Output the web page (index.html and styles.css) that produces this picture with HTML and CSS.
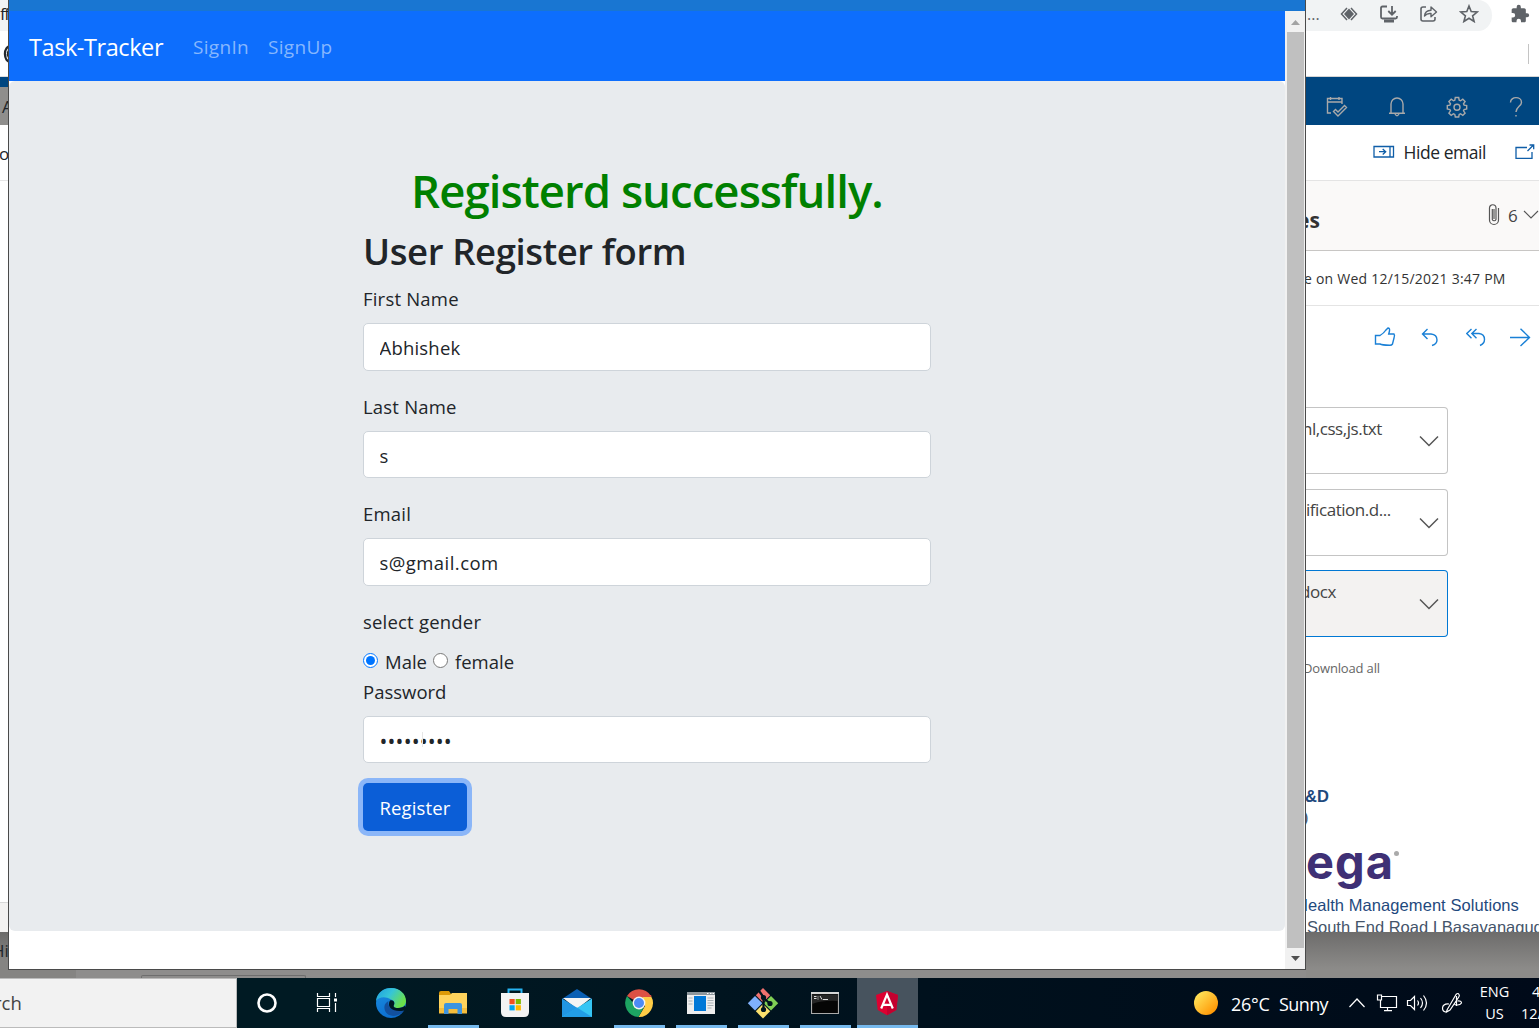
FILE: index.html
```html
<!DOCTYPE html>
<html lang="en">
<head>
<meta charset="utf-8">
<title>Task-Tracker</title>
<link rel="stylesheet" href="styles.css">
</head>
<body>
<div class="desktop">
  <div class="workspace">
    <aside class="edge-left">
      <div class="el-tab">ff</div>
      <div class="el-bar"><svg width="8" height="20" viewBox="0 0 8 20"><path d="M9 2C1 2 1 18 9 18M9 6C5 6 5 14 9 14" fill="none" stroke="#24292e" stroke-width="2.4"/></svg></div>
      <div class="el-blue"></div>
      <div class="el-gray">A</div>
      <div class="el-tool">o</div>
      <div class="el-body"></div>
      <div class="el-foot"></div>
      <div class="el-dim">Hi</div>
    </aside>

    <main class="center">
      <section class="window">
        <div class="titlebar"></div>
        <div class="viewport">
          <div class="page">
            <nav class="navbar">
              <a class="brand">Task-Tracker</a>
              <a class="link">SignIn</a>
              <a class="link">SignUp</a>
            </nav>
            <div class="jumbotron">
              <form class="form">
                <h1>Registerd successfully.</h1>
                <h2>User Register form</h2>
                <label class="label">First Name</label>
                <input class="field name" type="text" value="Abhishek">
                <label class="label">Last Name</label>
                <input class="field" type="text" value="s">
                <label class="label">Email</label>
                <input class="field mail" type="text" value="s@gmail.com">
                <label class="label gender">select gender</label>
                <div class="radios">
                  <input type="radio" name="g" checked><span class="male">Male</span>
                  <input type="radio" name="g"><span class="female">female</span>
                </div>
                <label class="label pwlabel">Password</label>
                <div class="pw"><input class="field dots" type="password" value="password1"><i class="ibeam"></i></div>
                <button class="submit" type="button">Register</button>
              </form>
            </div>
          </div>
          <div class="scrollbar">
            <svg class="arrow" width="19" height="21" viewBox="0 0 19 21"><path d="M6 14l4.500-5 4.500 5z" fill="#a3a3a3"/></svg>
            <div class="thumb"></div>
            <svg class="arrow" width="19" height="21" viewBox="0 0 19 21"><path d="M6 8h9l-4.500 5z" fill="#505050"/></svg>
          </div>
        </div>
      </section>
      <div class="under"><div class="under-left"></div><div class="under-box"></div></div>
    </main>

    <aside class="edge-right">
      <div class="omni">
        <span class="omni-dots">...</span>
        <svg class="i-eye" width="18" height="16" viewBox="0 0 18 16" fill="none" stroke="#5f6368" stroke-width="1.500"><path d="M7 2L1.500 8 7 14M11 2L16.500 8 11 14"/><path d="M9 2.500l5 5.500-5 5.500L4 8z" fill="#5f6368" stroke="none"/></svg>
        <svg class="i-install" width="20" height="18" viewBox="0 0 20 18" fill="none" stroke="#5f6368" stroke-width="1.800"><path d="M8 1.500H3.500Q2 1.500 2 3v9q0 1.500 1.500 1.500h13Q18 13.500 18 12v-1M13 1v8M9.300 6l3.700 3.700L16.700 6"/><path d="M5 16h10" stroke-width="3"/></svg>
        <svg class="i-share" width="20" height="18" viewBox="0 0 20 18" fill="none" stroke="#5f6368" stroke-width="1.600"><path d="M7 2H4Q2 2 2 4v10q0 2 2 2h10q2 0 2-2v-2"/><path d="M5.500 11Q6 5.500 12 5.300V2l5.500 5-5.500 4.800V8.500Q8 8 5.500 11z" stroke-width="1.400" stroke-linejoin="round"/></svg>
        <svg class="i-star" width="20" height="19" viewBox="0 0 20 19"><path d="M10 2l2.200 5.600 6 .4-4.600 3.800 1.500 5.700L10 14.300l-5.100 3.200 1.500-5.700L1.800 8l6-.4z" fill="none" stroke="#5f6368" stroke-width="1.600"/></svg>
      </div>
      <svg class="puzzle" width="20" height="20" viewBox="0 0 24 24" fill="#5f6368"><path d="M20.500 11H19V7c0-1.100-.9-2-2-2h-4V3.500a2.500 2.500 0 0 0-5 0V5H4c-1.100 0-2 .9-2 2v3.800h1.500a2.700 2.700 0 0 1 0 5.400H2V20c0 1.100.9 2 2 2h3.800v-1.500a2.700 2.700 0 0 1 5.400 0V22H17c1.100 0 2-.9 2-2v-4h1.500a2.500 2.500 0 0 0 0-5z"/></svg>
      <div class="bookmarks"><i></i></div>
      <div class="suite">
        <svg width="22" height="22" viewBox="0 0 22 22"><path d="M5 17H1.500V2.500H16V8M1.500 6H16M4.500 1v3M13 1v3M7.500 15.500l2-2 2.500 2.500 6.500-6.500 2 2L12 20z"/></svg>
        <svg width="20" height="22" viewBox="0 0 20 22"><path d="M4 17V8a6 6 0 0 1 12 0v9M2 17.200h16M8 18q2 3.500 4 0"/></svg>
        <svg width="22" height="22" viewBox="0 0 22 22"><path d="M9.300 1.500h3.400l.5 2.700 1.300.6 2.300-1.600 2.300 2.300-1.600 2.300.6 1.300 2.600.5v3.400l-2.600.5-.6 1.300 1.600 2.300-2.300 2.300-2.300-1.600-1.300.6-.5 2.600H9.300l-.5-2.600-1.300-.6-2.300 1.600-2.300-2.300 1.600-2.300-.6-1.300-2.600-.5V9.600l2.600-.5.6-1.300-1.600-2.300 2.300-2.300 2.300 1.600 1.300-.6z"/><circle cx="11" cy="11.200" r="3"/></svg>
        <svg class="help" width="14" height="22" viewBox="0 0 14 22"><path d="M1.500 6.500C1.500 0 12.500 0 12.500 6.500 12.500 10 7 11 7 16M7 19v1.500"/></svg>
      </div>
      <div class="cmds">
        <svg width="22" height="14" viewBox="0 0 22 14" fill="none" stroke="#0f5ea8" stroke-width="1.300"><path d="M1 1.500h19.500v10.500H1zM17 1.500v10.500M6 6.700h6.500M9.700 4l3 2.700-3 2.800"/></svg>
        <span class="t-hide">Hide email</span>
        <svg class="popout" width="20" height="16" viewBox="0 0 20 16" fill="none" stroke="#0f5ea8" stroke-width="1.300"><path d="M12 3.500H1v10.800h16V8M12.500 7l6-6M14.500 1h4.200v4.200"/></svg>
      </div>
      <div class="subject">
        <b>es</b>
        <svg class="clip" width="12" height="22" viewBox="0 0 12 22" fill="none" stroke="#555" stroke-width="1.200"><path d="M10.500 4v12a4.500 4.500 0 0 1-9 0V4a3.200 3.200 0 0 1 6.500 0v11.500a2 2 0 0 1-3.700 0V5M6 5v10"/></svg>
        <span>6</span>
        <svg class="chev" width="16" height="10" viewBox="0 0 16 10" fill="none" stroke="#555" stroke-width="1.100"><path d="M1 1l7 7 7-7"/></svg>
      </div>
      <div class="sent">e on Wed 12/15/2021 3:47 PM</div>
      <div class="actions">
        <svg class="a1" width="22" height="20" viewBox="0 0 22 20"><path d="M1.500 8.500H6Q10 6 11.500 3.500L14 1q2 0 1.500 3l-.8 3H20q1 1 0 4l-1.500 6q-1 1.500-3 1.300Q8 18 6 17H1.500z"/></svg>
        <svg class="a2" width="18" height="20" viewBox="0 0 18 20"><path d="M6.500 2L1.500 7l5 5M1.500 7H10q6 .5 6 6 0 4-5 5.500"/></svg>
        <svg class="a3" width="20" height="20" viewBox="0 0 20 20"><path d="M5.500 2L.8 6.500l4.700 4.700M10.500 2L5.800 6.500l4.700 4.700M5.800 6.500H13q5.500.5 5.500 6 0 4-4.500 6"/></svg>
        <svg class="a4" width="22" height="20" viewBox="0 0 22 20"><path d="M1 10.500h19.500M11.500 1.700l9 8.800-9 8.500"/></svg>
      </div>
      <div class="files">
        <div class="file"><span class="f1">nl,css,js.txt</span><svg width="20" height="12" viewBox="0 0 20 12"><path d="M1 1.500l9 9 9-9"/></svg></div>
        <div class="file"><span class="f2">ification.d...</span><svg width="20" height="12" viewBox="0 0 20 12"><path d="M1 1.500l9 9 9-9"/></svg></div>
        <div class="file sel"><span class="f3">docx</span><svg width="20" height="12" viewBox="0 0 20 12"><path d="M1 1.500l9 9 9-9"/></svg></div>
      </div>
      <div class="download">Download all</div>
      <div class="signature">
        <div class="sg1">&amp;D</div>
        <div class="sg2">)</div>
        <div class="logo">ega<i></i></div>
        <div class="sg3">Health Management Solutions</div>
        <div class="sg4">South End Road I Basavanagudi</div>
      </div>
      <div class="er-dim"></div>
    </aside>
  </div>

  <footer class="taskbar">
    <div class="search">rch</div>
    <div class="cell sys"><svg width="22" height="22" viewBox="0 0 22 22"><circle cx="11" cy="11" r="8.500" fill="none" stroke="#fff" stroke-width="2.600"/></svg></div>
    <div class="cell sys tv"><svg width="22" height="22" viewBox="0 0 22 22" fill="none" stroke="#fff" stroke-width="1.200"><path d="M1.500 1v3.500h12V1M1.500 6.500h12v8h-12zM1.500 20v-3.500h12V20M19.500 1v4M19.500 11v9"/><path d="M18 6.500h3v3h-3z" fill="#fff" stroke="none"/></svg></div>
    <div class="cell"><svg width="32" height="32" viewBox="0 0 32 32">
      <defs><linearGradient id="e1" x1="0" y1="0" x2="1" y2=".5"><stop offset="0" stop-color="#1d9de0"/><stop offset=".5" stop-color="#36c5d8"/><stop offset="1" stop-color="#6be04a"/></linearGradient><linearGradient id="e2" x1="0" y1="0" x2=".4" y2="1"><stop offset="0" stop-color="#1b8fe0"/><stop offset="1" stop-color="#0c6fd0"/></linearGradient></defs>
      <circle cx="16" cy="16" r="15" fill="url(#e2)"/>
      <path d="M1 14C2 5 9 1 16 1c9 0 15 6 15 13 0 5-4 7-8 7-4 0-5-1.500-4-3 1-2 .5-4.500-3-5.500C10 9 4 10 1 14z" fill="url(#e1)"/>
      <path d="M15 13.500c4-1 5 2.500 4 4.500-1 1.500 0 3 4 3 3 0 6-1 7-2.500l1.500 3-3 2.500c-5 2-11 1-13-2s-2-6.500-.5-8.500z" fill="#001822"/>
      <path d="M13.500 14c-1.500 6 4.500 12 15.500 9.500C22 33 8 29 9.500 19c.3-2 2-4 4-5z" fill="#12509e"/>
      </svg></div>
    <div class="cell run"><svg width="30" height="26" viewBox="0 0 30 26"><path d="M1 3Q1 1 3 1h8l2 3v3H1z" fill="#dd9a07"/><path d="M1 5h11l2-2h15v20H1z" fill="#ffd35c"/><path d="M1 18h28v5.500H1z" fill="#f5bd3c"/><path d="M6 24V15q0-2 2-2h14q2 0 2 2v9h-4.500v-5h-9v5z" fill="#3d94df"/></svg></div>
    <div class="cell"><svg width="30" height="32" viewBox="0 0 30 32"><path d="M8.500 8V2.500h13V8" fill="none" stroke="#27b4f2" stroke-width="2"/><path d="M1 6h28v19q0 5-5 5H6q-5 0-5-5z" fill="#f3f3f3"/><path d="M9.500 12h5.200v5.200H9.500z" fill="#f25022"/><path d="M15.700 12h5.200v5.200h-5.200z" fill="#7fba00"/><path d="M9.500 18.200h5.200v5.200H9.500z" fill="#00a4ef"/><path d="M15.700 18.200h5.200v5.200h-5.200z" fill="#ffb900"/></svg></div>
    <div class="cell"><svg width="32" height="30" viewBox="0 0 32 30"><path d="M1 11L16 1l15 10z" fill="#0a5fb4"/><path d="M2 10h28L16 21z" fill="#f4f4f4"/><path d="M1 10.500L31 29H1z" fill="#2196e3"/><path d="M31 10.500L16 20 1 29h30z" fill="#36c5f4"/><path d="M16 19.500L31 29H1z" fill="#229de6"/></svg></div>
    <div class="cell run"><svg width="30" height="30" viewBox="0 0 30 30"><path d="M15 15L3 8A14 14 0 0 1 27 8z" fill="#dd5144"/><path d="M27 8a14 14 0 0 1-12.500 21L21 18l-3-10z" fill="#ffcd46"/><path d="M3 8a14 14 0 0 0 11.500 21L20 19l-8-1z" fill="#1da462"/><path d="M15 8h12.200" stroke="#dd5144" stroke-width="2"/><circle cx="15" cy="15" r="6.400" fill="#f4f4f4"/><circle cx="15" cy="15" r="5" fill="#4c8bf5"/></svg></div>
    <div class="cell run"><svg width="28" height="24" viewBox="0 0 28 24"><path d="M0 1h28v22H0z" fill="#eee"/><path d="M0 1h28v3H0z" fill="#8c969c"/><path d="M20 2.500h1.500M23 2.500h1.500M25.500 2.500H27" stroke="#fff"/><path d="M7 5h12v15H7z" fill="#0078d7"/><path d="M1.500 7h4M1.500 10h4M1.500 13h4M20.500 7h6M20.500 9.500h6M20.500 12h6M20.500 14.500h6M20.500 17h4" stroke="#a9b1b5" stroke-width="1.200"/></svg></div>
    <div class="cell run"><svg width="32" height="32" viewBox="0 0 32 32"><path d="M16 1l7.200 7.200L16 15.500 8.800 8.200z" fill="#f0716f"/><path d="M8 9l7.300 7.200L8 23.500.8 16.200z" fill="#7fb0fb"/><path d="M24 9l7.200 7.200L24 23.500l-7.300-7.300z" fill="#80cf54"/><path d="M16 17l7.200 7.200L16 31.500l-7.200-7.300z" fill="#fbe06d"/><path d="M12 4l4.500 6v12M16.500 11l6.500 5.500" stroke="#00141f" stroke-width="2.200" fill="none"/><circle cx="16.500" cy="10.500" r="2.600" fill="#00141f"/><circle cx="23" cy="16.500" r="2.600" fill="#00141f"/><circle cx="16.500" cy="22.500" r="2.600" fill="#00141f"/></svg></div>
    <div class="cell run cmd"><svg width="28" height="24" viewBox="0 0 28 24"><path d="M.5 1.500h27v21H.5z" fill="#050505" stroke="#aaa" stroke-width="1.200"/><path d="M0 1h28v2H0z" fill="#d6d6d6"/><path d="M1 22V13Q12 9 27 10V3.500H1z" fill="#262626"/><path d="M3 7.500h2.500M3 5.500h2.500M7 5.500v1M7 7.500v1M9 5l2 3.500M12 8.500h5" stroke="#ddd" stroke-width="1"/></svg></div>
    <div class="cell run active"><svg width="24" height="26" viewBox="0 0 24 26"><path d="M12 1l11 4-1.700 15L12 25.200 2.700 20 1 5z" fill="#dd0031"/><path d="M12 1l11 4-1.700 15L12 25.200z" fill="#c3002f"/><path d="M6.200 18.500L12 4.500l5.800 14M8.500 14.800h7" fill="none" stroke="#fff" stroke-width="2.200"/></svg></div>
    <div class="tray">
      <svg class="sun" width="24" height="24" viewBox="0 0 24 24"><defs><linearGradient id="s" x1="0" y1="0" x2="1" y2="1"><stop offset=".1" stop-color="#ffe65c"/><stop offset=".9" stop-color="#ff9300"/></linearGradient></defs><circle cx="12" cy="12" r="12" fill="url(#s)"/></svg>
      <span class="temp">26°C</span><span class="cond">Sunny</span>
      <svg class="up" width="18" height="12" viewBox="0 0 18 12"><path d="M1.500 10L9 2l7.500 8"/></svg>
      <svg class="net" width="22" height="20" viewBox="0 0 22 20"><path d="M6 3.500h14.500v11H4.500V7.500M11.500 14.500v3M8 17.700h8M1.500 2h4v5h-4z"/></svg>
      <svg class="vol" width="22" height="20" viewBox="0 0 22 20"><path d="M1.500 7.500h3l4-4v13l-4-4h-3zM11.500 7.500q2 2.500 0 5M14.500 5q4 5 0 10M17.500 2.500q6 7.500 0 15"/></svg>
      <svg class="pen" width="22" height="22" viewBox="0 0 22 22"><path d="M6 18L15 2.500q2-2 3 0 1 1-.5 3L9 18l-3.500 2zM8 12q-6-.5-6.500 4 0 4 4 4M13.500 12.500q5 1.500 7-1.500 0-2.500-4-2M15.500 4v10"/></svg>
      <div class="lang"><span>ENG</span><span>US</span></div>
      <div class="clock"><span class="hr">4:10 PM</span><span>12/15/2021</span></div>
    </div>
  </footer>
</div>
</body>
</html>
```
FILE: styles.css
```css
* { box-sizing: border-box; }
body { margin: 0; font-family: "Open Sans", "Noto Sans", sans-serif; color: #212529; }
.desktop { width: 1539px; height: 1028px; display: flex; flex-direction: column; overflow: hidden; background: #8c8b89; }
.workspace { display: flex; height: 978px; }
svg { display: block; flex: none; }
span, label { white-space: nowrap; }

/* sliver of the mail window on the left */
.edge-left { width: 8px; flex: none; overflow: hidden; display: flex; flex-direction: column; background: #fff; }
.edge-left > div { flex: none; overflow: hidden; white-space: nowrap; }
.el-tab { height: 31px; background: #f1f3f4; font-size: 17px; line-height: 27px; letter-spacing: -1.5px; }
.el-bar { height: 46px; padding: 13px 0 0 2px; border-bottom: 1px solid #ddd; }
.el-blue { height: 10px; background: #004680; }
.el-gray { height: 38px; background: #8f8e8c; font-size: 17px; line-height: 40px; padding-left: 2px; }
.el-tool { height: 56px; line-height: 57px; font-size: 17px; text-indent: -1px; border-bottom: 1px solid #e5e5e5; }
.el-body { height: 721px; }
.el-foot { height: 30px; background: #f3f2f1; border-top: 1px solid #d8d8d8; }
.el-dim { height: 46px; background: linear-gradient(#6b6a69, #858482 60%); font-size: 17px; line-height: 38px; text-indent: -8px; }

/* application window */
.center { width: 1298px; flex: none; display: flex; flex-direction: column; }
.window { height: 970px; border: 1px solid #4a4a4a; border-top: 0; background: #fff; display: flex; flex-direction: column; }
.titlebar { height: 11px; background: #1976d2; }
.viewport { flex: 1; display: flex; }
.page { width: 1276px; }
.navbar { height: 70px; background: #0d6efd; display: flex; align-items: center; padding: 1px 20px 0; color: #fff; }
.brand { width: 164px; font-size: 23.5px; line-height: 30px; letter-spacing: -.42px; }
.link { font-size: 19px; color: #86b7fe; width: 75px; letter-spacing: .3px; }
.jumbotron { height: 850px; background: #e8ebee; border-radius: 6px; padding-top: 79px; }
.form { width: 568px; margin: 0 auto; display: flex; flex-direction: column; align-items: flex-start; }
h1, h2 { margin: 0; font-weight: 600; white-space: nowrap; }
h1 { align-self: center; color: #008000; font-size: 45.5px; line-height: 60px; height: 68px; letter-spacing: -.95px; }
h2 { font-size: 36.5px; line-height: 47px; height: 56px; letter-spacing: -.4px; }
.label { font-size: 18.5px; line-height: 30px; height: 39px; letter-spacing: .2px; }
.pwlabel { letter-spacing: 0; }
.gender { height: 40px; }
.field { width: 568px; height: 47.5px; border: 1px solid #ced4da; border-radius: 5px; background: #fff; padding: 2px 15px 0 15.500px; font: 18.5px "Open Sans", sans-serif; color: #212529; margin-bottom: 21px; outline: 0; }
.name { letter-spacing: .2px; }
.mail { letter-spacing: .45px; }
.radios { display: flex; align-items: center; height: 30px; font-size: 18.5px; line-height: 30px; }
.radios input { width: 15px; height: 15px; margin: 0 7px 3px 0; }
.male { width: 48px; }
.pw { position: relative; height: 67px; }
.dots { font-size: 21px; letter-spacing: .15px; padding-top: 3px; }
.ibeam { position: absolute; left: 59px; top: 16px; width: 1px; height: 15px; background: #e6e6e6; }
.submit { width: 104px; height: 48px; border: 0; border-radius: 5px; background: #0b5ed7; box-shadow: 0 0 0 5px #8bb6f8; color: #fff; font: 18.5px "Open Sans", sans-serif; letter-spacing: .15px; padding: 2px 0 0; }
.scrollbar { width: 20px; background: #f1f1f1; display: flex; flex-direction: column; }
.thumb { flex: 1; margin: 0 1px 0 2px; background: #c0c0c0; }
.under { height: 8px; display: flex; background: #8e8d8c; }
.under-left { width: 68px; background: #858482; }
.under-box { width: 165px; height: 3px; margin: 5px 0 0 65px; border: 1px solid #6e6e6e; border-bottom: 0; border-radius: 2px 2px 0 0; }

/* mail window on the right */
.edge-right { width: 233px; flex: none; position: relative; background: #fff; overflow: hidden; display: flex; flex-direction: column; }
.edge-right > div { flex: none; }
.omni { width: 186px; height: 31px; background: #f1f3f4; border-radius: 0 16px 16px 0 / 0 18px 18px 0; display: flex; align-items: center; padding-bottom: 4px; }
.omni-dots { width: 34px; font-size: 16px; color: #5f6368; text-indent: 1px; }
.i-eye { margin-right: 21px; }
.i-install { margin-right: 20px; }
.i-share { margin-right: 20px; }
.puzzle { position: absolute; left: 204px; top: 4px; }
.bookmarks { height: 46px; border-bottom: 1px solid #d5d5d5; padding: 13px 10px 0; display: flex; justify-content: flex-end; }
.bookmarks i { width: 1px; height: 20px; background: #c4c4c4; }
.suite { height: 48px; background: #004680; display: flex; align-items: center; padding: 11px 0 0 20px; }
.suite svg { fill: none; stroke: #a9a9a9; stroke-width: 1.4; }
.suite svg + svg { margin-left: 39px; }
.suite .help { margin-left: 41px; }
.cmds { height: 56px; display: flex; align-items: center; padding: 0 0 2px 67px; border-bottom: 1px solid #e4e4e4; }
.t-hide { margin-left: 8.500px; width: 111.500px; font-size: 17.5px; letter-spacing: -.45px; }
.subject { height: 70px; background: #faf9f8; border-bottom: 1px solid #c8c6c4; display: flex; align-items: center; font-size: 17px; color: #444; }
.subject b { font-size: 21px; width: 182px; text-indent: -9px; padding-top: 9px; color: #333; }
.subject span { margin-left: 8px; width: 14.500px; }
.clip { margin-bottom: 1px; }
.chev { margin-bottom: 2px; }
.sent { height: 55px; line-height: 55px; font-size: 14px; text-indent: -2px; letter-spacing: .23px; color: #333; border-bottom: 1px solid #e4e4e4; white-space: nowrap; }
.actions { height: 101px; padding: 21px 0 0 68px; display: flex; }
.actions svg { fill: none; stroke: #1a80d6; stroke-width: 1.4; }
.a2 { margin-left: 25px; } .a3 { margin-left: 27px; } .a4 { margin-left: 23px; }
.files { display: flex; flex-direction: column; gap: 14.300px; width: 142px; }
.file { height: 67.300px; border: 1px solid #c4c4c4; border-left: 0; border-radius: 0 4px 4px 0; display: flex; justify-content: space-between; padding: 8.500px 8px 0 0; font-size: 17px; line-height: 24px; letter-spacing: -.45px; color: #444; }
.file svg { fill: none; stroke: #555; stroke-width: 1.5; margin-top: 18.500px; }
.sel { background: #f3f2f1; border-color: #0078d4; }
.f1 { margin-left: -4px; }
.f3 { margin-left: -6px; }
.download { height: 147.500px; padding-top: 19.500px; font-size: 13px; line-height: 22px; letter-spacing: -.15px; text-indent: -3px; color: #666; }
.signature { height: 147px; overflow: hidden; font-family: "Liberation Sans", Arial, sans-serif; font-size: 16.500px; line-height: 22px; color: #1f497d; white-space: nowrap; }
.sg1 { font-weight: 700; text-indent: -1px; }
.sg2 { text-indent: -3px; line-height: 20px; height: 22px; color: #44546a; }
.logo { font: 700 47px/66px Inter, sans-serif; height: 65px; display: flex; color: #3f3075; letter-spacing: 1px; padding-left: 0; }
.logo i { width: 5px; height: 5px; border-radius: 3px; background: #aaa; margin: 22px 0 0 0; }
.sg3 { text-indent: -10px; letter-spacing: .07px; }
.sg4 { text-indent: 1px; color: #44546a; }
.er-dim { height: 46px; background: linear-gradient(#6d6c6b, #8c8b89 80%); }

/* taskbar */
.taskbar { height: 50px; display: flex; background: linear-gradient(90deg, #001a23 20%, #00111d 60%, #000a19); color: #fff; }
.search { width: 237px; flex: none; background: #f2f2f2; border: 1px solid #bbb; border-left: 0; color: #444; font-size: 18.500px; line-height: 48px; text-indent: -6px; overflow: hidden; }
.cell { width: 62px; flex: none; display: flex; align-items: center; justify-content: center; position: relative; }
.sys { width: 60px; }
.tv { margin-right: 3px; }
.run::after { content: ""; position: absolute; left: 6px; bottom: 0; width: 51px; height: 3px; background: #76b9ed; }
.cmd { margin-right: 1px; }
.active { width: 61px; background: #47535e; }
.active svg { margin-right: 2px; }
.active::after { left: 0; width: 61px; }
.tray { display: flex; align-items: center; font-size: 18px; margin-left: 276px; flex: none; }
.tray svg { fill: none; stroke: #fff; stroke-width: 1.200; }
.tray .sun { stroke: none; }
.temp { margin: 2px 0 0 13px; width: 48px; letter-spacing: -.3px; }
.cond { margin-top: 2px; width: 69px; letter-spacing: -.6px; }
.net { margin-left: 10px; } .vol { margin-left: 8px; } .pen { margin-left: 13px; }
.lang { width: 32px; margin-left: 15.500px; font-size: 14.500px; line-height: 22px; display: flex; flex-direction: column; align-items: center; }
.clock { width: 72px; margin-left: 10.500px; font-size: 14.500px; line-height: 22px; display: flex; flex-direction: column; }
.hr { padding-left: 11px; }
```
